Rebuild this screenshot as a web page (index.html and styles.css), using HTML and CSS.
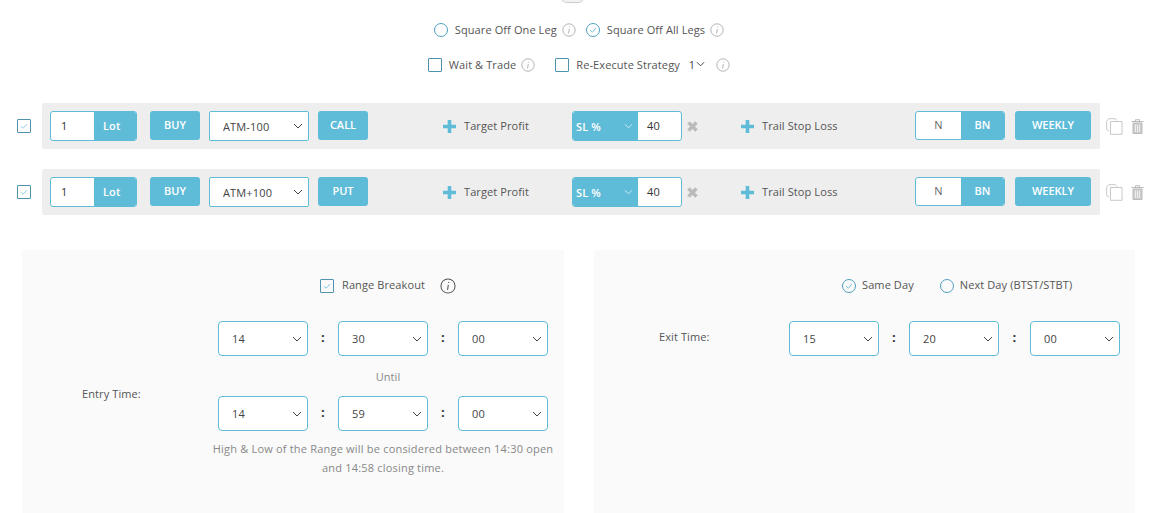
FILE: index.html
```html
<!DOCTYPE html>
<html lang="en">
<head>
    <meta charset="UTF-8">
    <meta name="viewport" content="width=device-width, initial-scale=1.0">
    <title>Strategy Legs</title>
    <link rel="stylesheet" href="styles.css">
</head>
<body>
    <div class="top-cut"><span class="toggle"></span></div>

    <div class="options options-one">
        <span class="radio"></span>
        <span class="opt-label">Square Off One Leg</span>
        <svg class="info" viewBox="0 0 14 14"><circle cx="7" cy="7" r="6.2"/><path d="M7.6 3.6v.8M7.3 6 6.6 10.4"/></svg>
        <span class="radio checked"><svg viewBox="0 0 14 14"><path d="M3.6 7.2 6.2 9.6 10.4 4.8"/></svg></span>
        <span class="opt-label">Square Off All Legs</span>
        <svg class="info" viewBox="0 0 14 14"><circle cx="7" cy="7" r="6.2"/><path d="M7.6 3.6v.8M7.3 6 6.6 10.4"/></svg>
    </div>

    <div class="options options-two">
        <span class="check"></span>
        <span class="opt-label">Wait &amp; Trade</span>
        <svg class="info" viewBox="0 0 14 14"><circle cx="7" cy="7" r="6.2"/><path d="M7.6 3.6v.8M7.3 6 6.6 10.4"/></svg>
        <span class="check check-gap"></span>
        <span class="opt-label">Re-Execute Strategy</span>
        <span class="count">1<svg viewBox="0 0 10 6"><path d="M1 1 5 5 9 1"/></svg></span>
        <svg class="info info-far" viewBox="0 0 14 14"><circle cx="7" cy="7" r="6.2"/><path d="M7.6 3.6v.8M7.3 6 6.6 10.4"/></svg>
    </div>

    <div class="leg">
        <span class="check"><svg viewBox="0 0 14 14"><path d="M3.4 7.2 6 9.6 10.6 4.8"/></svg></span>
        <div class="leg-bar">
            <div class="lots"><span class="lots-val">1</span><span class="lots-tag">Lot</span></div>
            <button class="btn btn-buy">BUY</button>
            <select class="pick pick-strike"><option>ATM-100</option></select>
            <button class="btn btn-type">CALL</button>
            <div class="add add-target"><svg viewBox="0 0 13 13"><path d="M6.5 0v13M0 6.5h13"/></svg><span>Target Profit</span></div>
            <div class="sl"><span class="sl-tag">SL %<svg viewBox="0 0 10 6"><path d="M1 1 5 5 9 1"/></svg></span><span class="sl-val">40</span></div>
            <svg class="remove" viewBox="0 0 11 11"><path d="M1.5 1.5 9.5 9.5M9.5 1.5 1.5 9.5"/></svg>
            <div class="add add-trail"><svg viewBox="0 0 13 13"><path d="M6.5 0v13M0 6.5h13"/></svg><span>Trail Stop Loss</span></div>
            <div class="index"><span class="index-off">N</span><span class="index-on">BN</span></div>
            <button class="btn btn-expiry">WEEKLY</button>
        </div>
        <svg class="copy" viewBox="0 0 17 17"><path d="M11 2.500 9.500 .7H3L.7 2.800V11.500L3 13"/><path d="M4.500 3.500H16V16.300H4.500Z"/></svg>
        <svg class="trash" viewBox="0 0 13 15"><path d="M4.500 2V.7H8.500V2"/><path d="M.5 2.500H12.500"/><path class="trash-body" d="M2 4H11V14.500H2Z"/><path class="trash-line" d="M4.500 5.500V13M6.500 5.500V13M8.500 5.500V13"/></svg>
    </div>

    <div class="leg">
        <span class="check"><svg viewBox="0 0 14 14"><path d="M3.4 7.2 6 9.6 10.6 4.8"/></svg></span>
        <div class="leg-bar">
            <div class="lots"><span class="lots-val">1</span><span class="lots-tag">Lot</span></div>
            <button class="btn btn-buy">BUY</button>
            <select class="pick pick-strike"><option>ATM+100</option></select>
            <button class="btn btn-type">PUT</button>
            <div class="add add-target"><svg viewBox="0 0 13 13"><path d="M6.5 0v13M0 6.5h13"/></svg><span>Target Profit</span></div>
            <div class="sl"><span class="sl-tag">SL %<svg viewBox="0 0 10 6"><path d="M1 1 5 5 9 1"/></svg></span><span class="sl-val">40</span></div>
            <svg class="remove" viewBox="0 0 11 11"><path d="M1.5 1.5 9.5 9.5M9.5 1.5 1.5 9.5"/></svg>
            <div class="add add-trail"><svg viewBox="0 0 13 13"><path d="M6.5 0v13M0 6.5h13"/></svg><span>Trail Stop Loss</span></div>
            <div class="index"><span class="index-off">N</span><span class="index-on">BN</span></div>
            <button class="btn btn-expiry">WEEKLY</button>
        </div>
        <svg class="copy" viewBox="0 0 17 17"><path d="M11 2.500 9.500 .7H3L.7 2.800V11.500L3 13"/><path d="M4.500 3.500H16V16.300H4.500Z"/></svg>
        <svg class="trash" viewBox="0 0 13 15"><path d="M4.500 2V.7H8.500V2"/><path d="M.5 2.500H12.500"/><path class="trash-body" d="M2 4H11V14.500H2Z"/><path class="trash-line" d="M4.500 5.500V13M6.500 5.500V13M8.500 5.500V13"/></svg>
    </div>

    <div class="panels">
        <section class="panel panel-entry">
            <div class="time-label entry-label">Entry Time:</div>
            <div class="entry-body">
                <div class="range-row">
                    <span class="check"><svg viewBox="0 0 14 14"><path d="M3.4 7.2 6 9.6 10.6 4.8"/></svg></span>
                    <span class="opt-label">Range Breakout</span>
                    <svg class="info info-dark" viewBox="0 0 14 14"><circle cx="7" cy="7" r="6.2"/><path d="M7.6 3.6v.8M7.3 6 6.6 10.4"/></svg>
                </div>
                <div class="time-row">
                    <select class="pick"><option>14</option></select><b class="colon">:</b>
                    <select class="pick"><option>30</option></select><b class="colon">:</b>
                    <select class="pick"><option>00</option></select>
                </div>
                <div class="until">Until</div>
                <div class="time-row">
                    <select class="pick"><option>14</option></select><b class="colon">:</b>
                    <select class="pick"><option>59</option></select><b class="colon">:</b>
                    <select class="pick"><option>00</option></select>
                </div>
                <p class="note">High &amp; Low of the Range will be considered between 14:30 open and 14:58 closing time.</p>
            </div>
        </section>
        <section class="panel panel-exit">
            <div class="exit-choice">
                <span class="radio checked"><svg viewBox="0 0 14 14"><path d="M3.6 7.2 6.200 9.600 10.400 4.800"/></svg></span>
                <span class="opt-label">Same Day</span>
                <span class="radio radio-gap"></span>
                <span class="opt-label">Next Day (BTST/STBT)</span>
            </div>
            <div class="exit-row">
                <div class="time-label exit-label">Exit Time:</div>
                <div class="time-row">
                    <select class="pick"><option>15</option></select><b class="colon">:</b>
                    <select class="pick"><option>20</option></select><b class="colon colon-wide">:</b>
                    <select class="pick"><option>00</option></select>
                </div>
            </div>
        </section>
    </div>
</body>
</html>
```

FILE: styles.css
```css
* {
    box-sizing: border-box;
}

html, body {
    height: 513px;
    overflow: hidden;
}

body {
    margin: 0;
    background-color: #fff;
    color: #555;
    font-family: "Open Sans", "Noto Sans", sans-serif;
    font-size: 11px;
    letter-spacing: 0.1px;
}

svg {
    fill: none;
    display: block;
    flex: none;
}

.top-cut {
    height: 3px;
    overflow: hidden;
    display: flex;
    justify-content: center;
}

.toggle {
    width: 25px;
    height: 14px;
    margin-top: -11px;
    border: 1px solid #ccc;
    border-radius: 7px;
    background: #f2f2f2;
    transform: translateX(-9px);
}

.options {
    display: flex;
    align-items: center;
    justify-content: center;
    height: 16px;
    padding-right: 5px;
}

.options-one {
    margin-top: 19px;
}

.options-two {
    margin-top: 19px;
}

.radio {
    width: 14px;
    height: 14px;
    border: 1px solid #4f9fc0;
    border-radius: 50%;
    flex: none;
}

.radio svg, .check svg {
    width: 100%;
    height: 100%;
    stroke: #5fbcd8;
    stroke-width: 1;
}

.radio.checked {
    margin-left: 10px;
}

.check {
    width: 14px;
    height: 14px;
    border: 1px solid #4f93ae;
    border-radius: 1px;
    flex: none;
}

.check-gap {
    margin-left: 20px;
}

.opt-label {
    margin: 0 0 2px 7px;
    white-space: nowrap;
}

.info {
    width: 14px;
    height: 14px;
    margin-left: 5px;
    stroke: #aaa;
    stroke-width: 0.9;
}

.info-far {
    margin-left: 11px;
}

.info-dark {
    width: 16px;
    height: 16px;
    margin-left: 15px;
    stroke: #555;
}

.count {
    display: flex;
    align-items: center;
    gap: 1px;
    margin: 0 0 2px 9px;
    color: #444;
}

.count svg {
    width: 9px;
    height: 6px;
    stroke: #333;
}

.leg {
    display: flex;
    align-items: center;
    margin-top: 30px;
    padding-left: 17px;
}

.leg + .leg {
    margin-top: 20px;
}

.leg > .check svg {
    stroke: #7cc4dc;
}

.leg-bar {
    display: flex;
    align-items: center;
    width: 1058px;
    height: 46px;
    margin-left: 11px;
    padding-left: 8px;
    background: #eee;
    border-radius: 2px;
}

.lots, .sl, .index {
    display: flex;
    height: 30px;
    border: 1px solid #5fbcd8;
    border-radius: 3px;
    overflow: hidden;
    background: #fff;
    flex: none;
}

.lots {
    width: 87px;
}

.lots-val {
    width: 43px;
    padding-left: 10px;
    line-height: 28px;
    color: #333;
}

.lots-tag {
    flex: 1;
    padding-left: 9px;
    line-height: 28px;
    background: #5fbcd8;
    color: #fff;
    font-weight: 600;
}

.btn {
    height: 29px;
    margin-bottom: 1px;
    padding: 0 0 2px;
    border: none;
    border-radius: 3px;
    background: #5fbcd8;
    color: #fff;
    font: inherit;
    font-weight: 600;
    letter-spacing: 0;
    flex: none;
}

.btn-buy {
    width: 50px;
    margin-left: 13px;
}

.btn-type {
    width: 50px;
    margin-left: 9px;
}

.pick {
    width: 90px;
    height: 35px;
    padding: 0 0 0 13px;
    border: 1px solid #5fbcd8;
    border-radius: 4px;
    background: #fff url("data:image/svg+xml,%3Csvg xmlns='http://www.w3.org/2000/svg' width='10' height='6'%3E%3Cpath d='M1 1 5 5 9 1' fill='none' stroke='%23444' stroke-width='1'/%3E%3C/svg%3E") no-repeat right 5px center;
    color: #444;
    font: inherit;
    letter-spacing: 0.15px;
    appearance: none;
    flex: none;
}

.pick-strike {
    width: 100px;
    height: 30px;
    margin-left: 9px;
    border-radius: 2px;
}

.add {
    display: flex;
    align-items: center;
    gap: 8px;
    white-space: nowrap;
    flex: none;
}

.add span {
    margin-bottom: 2px;
}

.add svg {
    width: 13px;
    height: 13px;
    stroke: #5fbcd8;
    stroke-width: 3.6;
}

.add-target {
    width: 129px;
    margin-left: 75px;
}

.sl {
    width: 110px;
}

.sl-tag {
    display: flex;
    align-items: center;
    justify-content: space-between;
    width: 65px;
    padding: 0 5px 0 3px;
    background: #5fbcd8;
    color: #fff;
    font-weight: 600;
}

.sl-tag svg {
    width: 9px;
    height: 6px;
    stroke: #d6eef6;
}

.sl-val {
    flex: 1;
    padding-left: 9px;
    line-height: 28px;
    color: #333;
}

.remove {
    width: 11px;
    height: 11px;
    margin-left: 5px;
    stroke: #bbb;
    stroke-width: 3.4;
}

.add-trail {
    width: 174px;
    margin-left: 43px;
}

.index {
    width: 90px;
    height: 29px;
    margin-bottom: 1px;
    text-align: center;
    line-height: 26px;
}

.index-off {
    width: 45px;
    color: #666;
}

.index-on {
    flex: 1;
    background: #5fbcd8;
    color: #fff;
    font-weight: 600;
}

.btn-expiry {
    width: 76px;
    margin-left: 10px;
}

.copy {
    width: 17px;
    height: 17px;
    margin-left: 6px;
    stroke: #c8c8c8;
}

.trash {
    width: 13px;
    height: 15px;
    margin-left: 8px;
    stroke: #bbb;
}

.trash-body {
    fill: #ccc;
}

.trash-line {
    stroke: #eee;
}

.panels {
    display: flex;
    gap: 30px;
    margin-top: 35px;
    padding-left: 22px;
}

.panel {
    width: 542px;
    height: 263px;
    background: #fafafa;
    flex: none;
}

.panel-entry {
    display: flex;
}

.panel-exit {
    width: 541px;
}

.time-label {
    white-space: nowrap;
}

.entry-label {
    width: 188px;
    padding: 136px 0 0 60px;
}

.entry-body {
    width: 348px;
    padding: 28px 0 0 8px;
}

.range-row {
    display: flex;
    align-items: center;
    height: 15px;
    padding-left: 102px;
}

.range-row .opt-label {
    margin-left: 8px;
}

.time-row {
    display: flex;
    align-items: center;
}

.range-row + .time-row {
    margin-top: 28px;
}

.colon {
    width: 30px;
    padding-bottom: 4px;
    text-align: center;
    color: #333;
    font-size: 13px;
}

.colon-wide {
    width: 31px;
}

.until {
    height: 40px;
    line-height: 42px;
    text-align: center;
    color: #888;
}

.note {
    width: 344px;
    margin: 8px 0 0 -7px;
    line-height: 19px;
    text-align: center;
    color: #888;
    letter-spacing: 0.2px;
}

.exit-choice {
    display: flex;
    align-items: center;
    height: 15px;
    margin-top: 28px;
    padding-left: 248px;
}

.exit-choice .radio.checked {
    margin-left: 0;
}

.exit-choice .opt-label {
    margin-left: 6px;
}

.radio-gap {
    margin-left: 26px;
}

.exit-row {
    display: flex;
    margin-top: 28px;
}

.exit-label {
    width: 195px;
    padding: 8px 0 0 65px;
}
```
